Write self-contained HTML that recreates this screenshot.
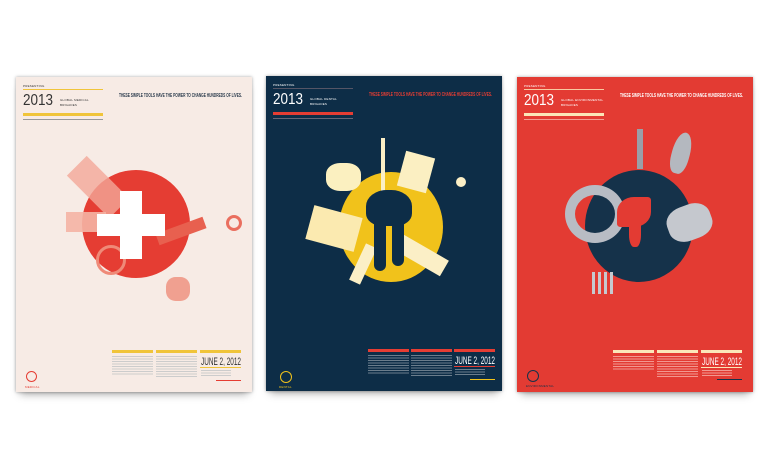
<!DOCTYPE html>
<html><head><meta charset="utf-8"><style>
*{margin:0;padding:0;box-sizing:border-box}
body{width:767px;height:460px;background:#fff;position:relative;overflow:hidden;font-family:"Liberation Sans",sans-serif}
.p{position:absolute;width:236px;height:315px;overflow:hidden;box-shadow:0 0 3px rgba(0,0,0,.35),0 6px 8px -4px rgba(0,0,0,.35)}
.p div,.p span,.p svg{position:absolute}
.tiny{font-size:3px;white-space:nowrap;letter-spacing:.2px}
svg text{font-family:"Liberation Sans Narrow","Liberation Sans",sans-serif}
</style></head><body>

<!-- Poster 1 -->
<div class="p" style="left:16px;top:77px;background:#f7ebe5;color:#333">
  <span class="tiny" style="left:7px;top:7px">PRESENTING</span>
  <div style="left:7px;top:12px;width:80px;height:1px;background:#f0c43a"></div>
  <svg style="left:7px;top:14px" width="34" height="16"><text x="0" y="14" font-size="16" textLength="30" lengthAdjust="spacingAndGlyphs" fill="#333">2013</text></svg>
  <span class="tiny" style="left:44px;top:21px">GLOBAL MEDICAL</span>
  <span class="tiny" style="left:44px;top:26px">BRIGADES</span>
  <div style="left:7px;top:36px;width:80px;height:3px;background:#f0c43a"></div>
  <div style="left:7px;top:42px;width:80px;height:1px;background:#999"></div>
  <svg style="left:103px;top:15px" width="125" height="6"><text x="0" y="5" font-size="5" font-weight="bold" textLength="123" lengthAdjust="spacingAndGlyphs" fill="#2b3b4d">THESE SIMPLE TOOLS HAVE THE POWER TO CHANGE HUNDREDS OF LIVES.</text></svg>
  <div style="left:66px;top:93px;width:108px;height:108px;border-radius:50%;background:#e53d33"></div>
  <div style="left:68px;top:80px;width:28px;height:60px;background:#f3a898;opacity:.8;transform:rotate(-45deg)"></div>
  <div style="left:50px;top:135px;width:40px;height:20px;background:#f4b4a4;opacity:.9"></div>
  <div style="left:140px;top:148px;width:50px;height:12px;background:#e8604f;transform:rotate(-20deg)"></div>
  <div style="left:80px;top:168px;width:30px;height:30px;border:3px solid #ef8a78;border-radius:50%"></div>
  <div style="left:150px;top:200px;width:24px;height:24px;background:#f0a090;border-radius:40%"></div>
  <div style="left:210px;top:138px;width:16px;height:16px;border:3px solid #ea6f5f;border-radius:50%"></div>
  <div style="left:104px;top:114px;width:22px;height:68px;background:#fff"></div>
  <div style="left:81px;top:137px;width:68px;height:22px;background:#fff"></div>
  <div style="left:96px;top:273px;width:41px;height:3px;background:#f0c43a"></div>
  <div style="left:140px;top:273px;width:41px;height:3px;background:#f0c43a"></div>
  <div style="left:184px;top:273px;width:41px;height:3px;background:#f0c43a"></div>
  <div style="left:96px;top:279px;width:41px;height:20px;background:repeating-linear-gradient(#ccc 0 1px,transparent 1px 2.5px)"></div>
  <div style="left:140px;top:279px;width:41px;height:22px;background:repeating-linear-gradient(#ccc 0 1px,transparent 1px 2.5px)"></div>
  <svg style="left:185px;top:278px" width="42" height="11"><text x="0" y="10" font-size="11" textLength="40" lengthAdjust="spacingAndGlyphs" fill="#333">JUNE 2, 2012</text></svg>
  <div style="left:184px;top:290px;width:41px;height:1px;background:#f0c43a"></div>
  <div style="left:185px;top:293px;width:30px;height:6px;background:repeating-linear-gradient(#ccc 0 1px,transparent 1px 2.5px)"></div>
  <div style="left:200px;top:303px;width:25px;height:1px;background:#e53d33"></div>
  <div style="left:10px;top:294px;width:11px;height:11px;border:1.5px solid #e53d33;border-radius:50%"></div>
  <span class="tiny" style="left:9px;top:308px;color:#e53d33">MEDICAL</span>
</div>

<!-- Poster 2 -->
<div class="p" style="left:266px;top:76px;background:#0d2d47;color:#fff">
  <span class="tiny" style="left:7px;top:7px">PRESENTING</span>
  <div style="left:7px;top:12px;width:80px;height:1px;background:#556"></div>
  <svg style="left:7px;top:14px" width="34" height="16"><text x="0" y="14" font-size="16" textLength="30" lengthAdjust="spacingAndGlyphs" fill="#fff">2013</text></svg>
  <span class="tiny" style="left:44px;top:21px">GLOBAL DENTAL</span>
  <span class="tiny" style="left:44px;top:26px">BRIGADES</span>
  <div style="left:7px;top:36px;width:80px;height:3px;background:#e53d33"></div>
  <div style="left:7px;top:42px;width:80px;height:1px;background:#667"></div>
  <svg style="left:103px;top:15px" width="125" height="6"><text x="0" y="5" font-size="5" font-weight="bold" textLength="123" lengthAdjust="spacingAndGlyphs" fill="#e53d33">THESE SIMPLE TOOLS HAVE THE POWER TO CHANGE HUNDREDS OF LIVES.</text></svg>
  <div style="left:73px;top:96px;width:104px;height:110px;border-radius:50%;background:#f1c21b"></div>
  <div style="left:60px;top:87px;width:35px;height:28px;background:#fbf0c0;border-radius:40%"></div>
  <div style="left:135px;top:78px;width:30px;height:36px;background:#fbefc2;transform:rotate(15deg)"></div>
  <div style="left:43px;top:135px;width:50px;height:35px;background:#fbeab0;transform:rotate(15deg)"></div>
  <div style="left:128px;top:170px;width:54px;height:18px;background:#fbefc6;transform:rotate(30deg)"></div>
  <div style="left:115px;top:62px;width:4px;height:60px;background:#fbefc6"></div>
  <div style="left:190px;top:101px;width:10px;height:10px;background:#fbefc6;border-radius:50%"></div>
  <div style="left:91px;top:168px;width:12px;height:40px;background:#fbefc6;transform:rotate(25deg)"></div>
  <div style="left:100px;top:114px;width:46px;height:36px;background:#0d2d47;border-radius:45% 45% 35% 35%"></div>
  <div style="left:108px;top:140px;width:12px;height:55px;background:#0d2d47;border-radius:0 0 6px 6px"></div>
  <div style="left:126px;top:140px;width:12px;height:50px;background:#0d2d47;border-radius:0 0 6px 6px"></div>
  <div style="left:102px;top:273px;width:41px;height:3px;background:#e53d33"></div>
  <div style="left:145px;top:273px;width:41px;height:3px;background:#e53d33"></div>
  <div style="left:188px;top:273px;width:41px;height:3px;background:#e53d33"></div>
  <div style="left:102px;top:279px;width:41px;height:20px;background:repeating-linear-gradient(#6b7d8c 0 1px,transparent 1px 2.5px)"></div>
  <div style="left:145px;top:279px;width:41px;height:22px;background:repeating-linear-gradient(#6b7d8c 0 1px,transparent 1px 2.5px)"></div>
  <svg style="left:189px;top:278px" width="42" height="11"><text x="0" y="10" font-size="11" textLength="40" lengthAdjust="spacingAndGlyphs" fill="#fff">JUNE 2, 2012</text></svg>
  <div style="left:188px;top:290px;width:41px;height:1px;background:#e53d33"></div>
  <div style="left:189px;top:293px;width:30px;height:6px;background:repeating-linear-gradient(#6b7d8c 0 1px,transparent 1px 2.5px)"></div>
  <div style="left:204px;top:303px;width:25px;height:1px;background:#f1c21b"></div>
  <div style="left:14px;top:295px;width:12px;height:12px;border:1.5px solid #f1c21b;border-radius:50%"></div>
  <span class="tiny" style="left:13px;top:309px;color:#f1c21b">DENTAL</span>
</div>

<!-- Poster 3 -->
<div class="p" style="left:517px;top:77px;background:#e33b33;color:#fff">
  <span class="tiny" style="left:7px;top:7px">PRESENTING</span>
  <div style="left:7px;top:12px;width:80px;height:1px;background:#f9c9a0"></div>
  <svg style="left:7px;top:14px" width="34" height="16"><text x="0" y="14" font-size="16" textLength="30" lengthAdjust="spacingAndGlyphs" fill="#fff">2013</text></svg>
  <span class="tiny" style="left:44px;top:21px">GLOBAL ENVIRONMENTAL</span>
  <span class="tiny" style="left:44px;top:26px">BRIGADES</span>
  <div style="left:7px;top:36px;width:80px;height:3px;background:#fbe6b8"></div>
  <div style="left:7px;top:42px;width:80px;height:1px;background:#f59a90"></div>
  <svg style="left:103px;top:15px" width="125" height="6"><text x="0" y="5" font-size="5" font-weight="bold" textLength="123" lengthAdjust="spacingAndGlyphs" fill="#fff">THESE SIMPLE TOOLS HAVE THE POWER TO CHANGE HUNDREDS OF LIVES.</text></svg>
  <div style="left:68px;top:93px;width:108px;height:112px;border-radius:50%;background:#15324a"></div>
  <div style="left:48px;top:108px;width:60px;height:58px;border-radius:50%;border:10px solid #b8bcc4"></div>
  <div style="left:150px;top:128px;width:45px;height:35px;background:#c5c8ce;border-radius:40%;transform:rotate(-20deg)"></div>
  <div style="left:155px;top:55px;width:18px;height:42px;background:#b4b8bf;border-radius:50% 50% 40% 40%;transform:rotate(15deg)"></div>
  <div style="left:120px;top:52px;width:6px;height:40px;background:#9aa0a8"></div>
  <div style="left:75px;top:195px;width:24px;height:22px;background:repeating-linear-gradient(90deg,#c6c9cf 0 3px,transparent 3px 6px)"></div>
  <div style="left:100px;top:120px;width:34px;height:30px;background:#e33b33;border-radius:50% 10% 50% 10%"></div>
  <div style="left:112px;top:140px;width:12px;height:30px;background:#e33b33;border-radius:0 0 40% 40%"></div>
  <div style="left:96px;top:273px;width:41px;height:3px;background:#fbe6b8"></div>
  <div style="left:140px;top:273px;width:41px;height:3px;background:#fbe6b8"></div>
  <div style="left:184px;top:273px;width:41px;height:3px;background:#fbe6b8"></div>
  <div style="left:96px;top:279px;width:41px;height:14px;background:repeating-linear-gradient(#f29890 0 1px,transparent 1px 2.5px)"></div>
  <div style="left:140px;top:279px;width:41px;height:22px;background:repeating-linear-gradient(#f29890 0 1px,transparent 1px 2.5px)"></div>
  <svg style="left:185px;top:278px" width="42" height="11"><text x="0" y="10" font-size="11" textLength="40" lengthAdjust="spacingAndGlyphs" fill="#fff">JUNE 2, 2012</text></svg>
  <div style="left:184px;top:290px;width:41px;height:1px;background:#fbe6b8"></div>
  <div style="left:185px;top:293px;width:30px;height:6px;background:repeating-linear-gradient(#f29890 0 1px,transparent 1px 2.5px)"></div>
  <div style="left:200px;top:302px;width:25px;height:1px;background:#15324a"></div>
  <div style="left:10px;top:293px;width:12px;height:12px;border:1.5px solid #15324a;border-radius:50%"></div>
  <span class="tiny" style="left:9px;top:307px;color:#15324a">ENVIRONMENTAL</span>
</div>
</body></html>
